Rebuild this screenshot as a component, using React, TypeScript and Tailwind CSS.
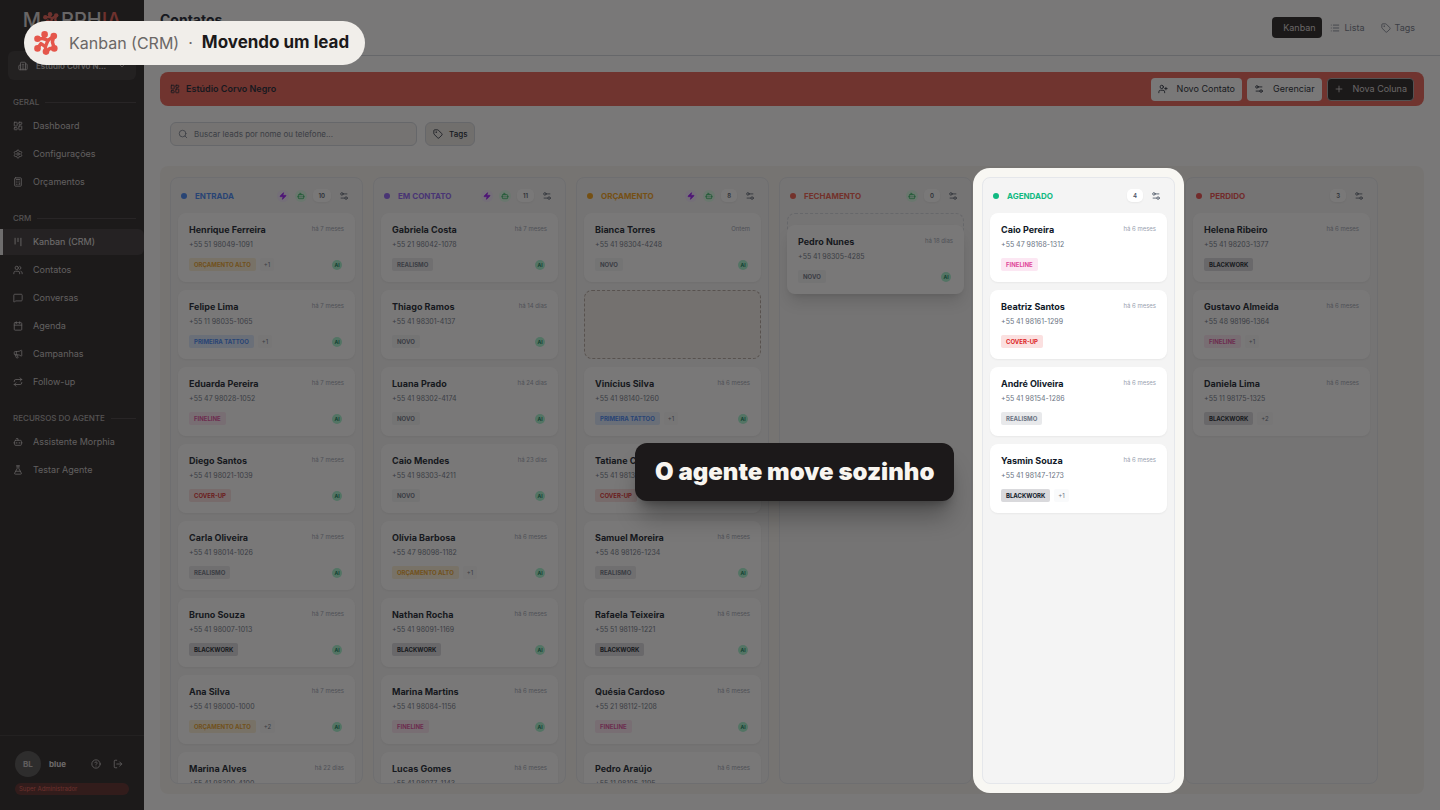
import React from 'react';
import {
  Bot,
  Building2,
  Calculator,
  Calendar,
  ChevronDown,
  CircleHelp,
  FlaskConical,
  Kanban,
  LayoutDashboard,
  List,
  LogOut,
  Megaphone,
  MessageSquare,
  Plus,
  Repeat,
  Search,
  Settings,
  Settings2,
  Tag,
  UserPlus,
  Users,
  Zap,
  type LucideIcon
} from 'lucide-react';

type TagName = 'ORÇAMENTO ALTO' | 'PRIMEIRA TATTOO' | 'FINELINE' | 'COVER-UP' | 'REALISMO' | 'BLACKWORK' | 'NOVO';

interface Lead {
  name: string;
  phone: string;
  when: string;
  tag: TagName;
  extra?: number;
  ai?: boolean;
  state?: 'origin' | 'dragging';
}

interface ColumnData {
  title: string;
  dot: string;
  text: string;
  count: number;
  zap?: boolean;
  bot?: boolean;
  active?: boolean;
  leads: Lead[];
}

const tagStyles: Record<TagName, string> = {
  'ORÇAMENTO ALTO': 'bg-[#fdf0d5] text-[#eba121]',
  'PRIMEIRA TATTOO': 'bg-[#dbe8fe] text-[#3b82f6]',
  FINELINE: 'bg-[#fce7f3] text-[#e0499a]',
  'COVER-UP': 'bg-[#fbe0e0] text-[#dc2626]',
  REALISMO: 'bg-[#e8e9eb] text-gray-500',
  BLACKWORK: 'bg-[#d9d9dc] text-gray-900',
  NOVO: 'bg-gray-100 text-gray-500'
};

const lead = (name: string, phone: string, when: string, tag: TagName, extra?: number): Lead => ({
  name,
  phone: `+55 ${phone}`,
  when,
  tag,
  extra,
  ai: true
});

const columns: ColumnData[] = [
  {
    title: 'ENTRADA',
    dot: 'bg-[#3b82f6]',
    text: 'text-[#3b82f6]',
    count: 10,
    zap: true,
    bot: true,
    leads: [
      lead('Henrique Ferreira', '51 98049-1091', 'há 7 meses', 'ORÇAMENTO ALTO', 1),
      lead('Felipe Lima', '11 98035-1065', 'há 7 meses', 'PRIMEIRA TATTOO', 1),
      lead('Eduarda Pereira', '47 98028-1052', 'há 7 meses', 'FINELINE'),
      lead('Diego Santos', '41 98021-1039', 'há 7 meses', 'COVER-UP'),
      lead('Carla Oliveira', '41 98014-1026', 'há 7 meses', 'REALISMO'),
      lead('Bruno Souza', '41 98007-1013', 'há 7 meses', 'BLACKWORK'),
      lead('Ana Silva', '41 98000-1000', 'há 7 meses', 'ORÇAMENTO ALTO', 2),
      lead('Marina Alves', '41 98300-4100', 'há 22 dias', 'NOVO')
    ]
  },
  {
    title: 'EM CONTATO',
    dot: 'bg-[#8b5cf6]',
    text: 'text-[#8b5cf6]',
    count: 11,
    zap: true,
    bot: true,
    leads: [
      lead('Gabriela Costa', '21 98042-1078', 'há 7 meses', 'REALISMO'),
      lead('Thiago Ramos', '41 98301-4137', 'há 14 dias', 'NOVO'),
      lead('Luana Prado', '41 98302-4174', 'há 24 dias', 'NOVO'),
      lead('Caio Mendes', '41 98303-4211', 'há 23 dias', 'NOVO'),
      lead('Olívia Barbosa', '47 98098-1182', 'há 6 meses', 'ORÇAMENTO ALTO', 1),
      lead('Nathan Rocha', '41 98091-1169', 'há 6 meses', 'BLACKWORK'),
      lead('Marina Martins', '41 98084-1156', 'há 6 meses', 'FINELINE'),
      lead('Lucas Gomes', '41 98077-1143', 'há 6 meses', 'NOVO')
    ]
  },
  {
    title: 'ORÇAMENTO',
    dot: 'bg-[#f59e0b]',
    text: 'text-[#f59e0b]',
    count: 8,
    zap: true,
    bot: true,
    leads: [
      lead('Bianca Torres', '41 98304-4248', 'Ontem', 'NOVO'),
      { ...lead('Pedro Nunes', '41 98305-4285', 'há 18 dias', 'NOVO'), state: 'origin' },
      lead('Vinícius Silva', '41 98140-1260', 'há 6 meses', 'PRIMEIRA TATTOO', 1),
      lead('Tatiane Castro', '41 98133-1247', 'há 6 meses', 'COVER-UP'),
      lead('Samuel Moreira', '48 98126-1234', 'há 6 meses', 'REALISMO'),
      lead('Rafaela Teixeira', '51 98119-1221', 'há 6 meses', 'BLACKWORK'),
      lead('Quésia Cardoso', '21 98112-1208', 'há 6 meses', 'FINELINE'),
      lead('Pedro Araújo', '11 98105-1195', 'há 6 meses', 'NOVO')
    ]
  },
  {
    title: 'FECHAMENTO',
    dot: 'bg-[#f05545]',
    text: 'text-[#f05545]',
    count: 0,
    bot: true,
    leads: [{ ...lead('Pedro Nunes', '41 98305-4285', 'há 18 dias', 'NOVO'), state: 'dragging' }]
  },
  {
    title: 'AGENDADO',
    dot: 'bg-[#10b981]',
    text: 'text-[#10b981]',
    count: 4,
    active: true,
    leads: [
      { ...lead('Caio Pereira', '47 98168-1312', 'há 6 meses', 'FINELINE'), ai: false },
      { ...lead('Beatriz Santos', '41 98161-1299', 'há 6 meses', 'COVER-UP'), ai: false },
      { ...lead('André Oliveira', '41 98154-1286', 'há 6 meses', 'REALISMO'), ai: false },
      { ...lead('Yasmin Souza', '41 98147-1273', 'há 6 meses', 'BLACKWORK', 1), ai: false }
    ]
  },
  {
    title: 'PERDIDO',
    dot: 'bg-[#ef4444]',
    text: 'text-[#ef4444]',
    count: 3,
    leads: [
      { ...lead('Helena Ribeiro', '41 98203-1377', 'há 6 meses', 'BLACKWORK'), ai: false },
      { ...lead('Gustavo Almeida', '48 98196-1364', 'há 6 meses', 'FINELINE', 1), ai: false },
      { ...lead('Daniela Lima', '11 98175-1325', 'há 6 meses', 'BLACKWORK', 2), ai: false }
    ]
  }
];

const menu: { title: string; items: { label: string; icon: LucideIcon; active?: boolean }[] }[] = [
  {
    title: 'GERAL',
    items: [
      { label: 'Dashboard', icon: LayoutDashboard },
      { label: 'Configurações', icon: Settings },
      { label: 'Orçamentos', icon: Calculator }
    ]
  },
  {
    title: 'CRM',
    items: [
      { label: 'Kanban (CRM)', icon: Kanban, active: true },
      { label: 'Contatos', icon: Users },
      { label: 'Conversas', icon: MessageSquare },
      { label: 'Agenda', icon: Calendar },
      { label: 'Campanhas', icon: Megaphone },
      { label: 'Follow-up', icon: Repeat }
    ]
  },
  {
    title: 'RECURSOS DO AGENTE',
    items: [
      { label: 'Assistente Morphia', icon: Bot },
      { label: 'Testar Agente', icon: FlaskConical }
    ]
  }
];

const BrandMark: React.FC<{ className?: string }> = ({ className = '' }) => (
  <svg viewBox="0 0 24 24" className={className} fill="currentColor" stroke="currentColor" aria-hidden="true">
    <g strokeWidth="3.4" fill="none" strokeLinecap="round" strokeLinejoin="round">
      <path d="M10.5 3.4 9.5 7.6 3.4 7.8" />
      <path d="M9.5 7.6 14 9.4 19.8 5" />
      <path d="M19.8 5 18.4 11 20.3 17.5" />
      <path d="M3.4 17.4 7 12.6 11.4 15.6 12 20.8" />
      <path d="M11.4 15.6 14 9.4M12 20.8 16 17.4 20.3 17.5" />
    </g>
    <g stroke="none">
      <circle cx="10.6" cy="3.4" r="3.3" />
      <circle cx="19.8" cy="5" r="3.3" />
      <circle cx="3.5" cy="7.8" r="3.3" />
      <circle cx="3.5" cy="17.4" r="3.3" />
      <circle cx="12" cy="20.6" r="3.3" />
      <circle cx="20.3" cy="17.4" r="3.3" />
    </g>
  </svg>
);

const LeadCard: React.FC<{ data: Lead; className?: string }> = ({ data, className = '' }) => (
  <article className={`h-[69px] rounded-lg bg-white px-[11px] pt-[11px] ${className}`}>
    <div className="flex items-start justify-between">
      <h3 className="text-[9px] leading-3 font-bold text-gray-900">{data.name}</h3>
      <time className="text-[6px] leading-[10px] text-gray-400">{data.when}</time>
    </div>
    <p className="mt-1 text-[7px] leading-[10px] text-gray-500">{data.phone}</p>
    <div className="mt-2 flex h-[13px] items-center">
      <span className={`rounded-[2px] px-[5px] text-[6px] leading-[13px] font-bold ${tagStyles[data.tag]}`}>
        {data.tag}
      </span>
      {data.extra && (
        <span className="ml-1 rounded-[2px] bg-gray-50 px-1 text-[6px] leading-[13px] text-gray-500">+{data.extra}</span>
      )}
      {data.ai && (
        <span className="mr-[2px] ml-auto size-[10px] rounded-full bg-emerald-200 text-center text-[5px] leading-[10px] font-bold text-emerald-700">
          AI
        </span>
      )}
    </div>
  </article>
);

const LeadSlot: React.FC<{ data: Lead }> = ({ data }) => {
  if (data.state === 'origin') {
    return <div className="h-[69px] shrink-0 rounded-lg border border-dashed border-[#b0a49c] bg-[#f2eeea]" />;
  }
  if (data.state === 'dragging') {
    return (
      <div className="relative h-[69px] rounded-lg border border-dashed border-gray-300">
        <LeadCard data={data} className="absolute -inset-x-px top-[11px] shadow-lg shadow-black/15" />
      </div>
    );
  }
  return <LeadCard data={data} className="shrink-0 shadow-xs" />;
};

// The highlighted column dims everything around it with its own spread shadow
const Column: React.FC<{ column: ColumnData }> = ({ column }) => (
  <section
    className={`flex w-[193px] shrink-0 flex-col overflow-hidden rounded-lg border border-gray-200 bg-[#f4f4f4] px-[7px] ${
      column.active ? 'relative z-10 shadow-[0_0_0_9px_#f8f7f3,0_0_0_2400px_rgba(28,26,26,0.59)]' : ''
    }`}
  >
    <header className="flex h-[35px] shrink-0 items-center pr-[6px] pl-[3px]">
      <span className={`size-[6px] rounded-full ${column.dot}`} />
      <h2 className={`ml-2 text-[8px] leading-3 font-bold ${column.text}`}>{column.title}</h2>
      <div className="ml-auto flex items-center gap-[6px]">
        {column.zap && (
          <span className="flex size-3 items-center justify-center rounded-full bg-purple-100 text-purple-600">
            <Zap className="size-2" fill="currentColor" />
          </span>
        )}
        {column.bot && (
          <span className="flex size-3 items-center justify-center rounded-full bg-green-100 text-green-600">
            <Bot className="size-2" />
          </span>
        )}
        <span className="rounded-[5px] bg-white px-[6px] text-[6px] leading-[13px] font-semibold text-gray-600 shadow-xs">
          {column.count}
        </span>
        <button type="button" aria-label={`Configurar ${column.title}`} className="ml-[2px] text-gray-600">
          <Settings2 className="size-[10px]" />
        </button>
      </div>
    </header>
    <div className="flex min-h-0 flex-1 flex-col gap-2">
      {column.leads.map(item => (
        <LeadSlot key={item.name} data={item} />
      ))}
    </div>
  </section>
);

const Sidebar: React.FC = () => (
  <aside className="flex w-36 shrink-0 flex-col bg-[#1e1b1c] text-[#c4c1c1]">
    <div className="flex h-[51px] shrink-0 items-start justify-center pt-2 text-[20px] leading-6 font-medium text-[#d6d3d3]">
      M
      <BrandMark className="mx-[2px] mt-1 size-4 text-[#e5564b]" />
      RPH<span className="text-[#e5564b]">IA</span>
    </div>
    <button
      type="button"
      className="mx-2 flex h-[29px] shrink-0 items-center rounded-md bg-[#2f2c2d] px-[10px] text-[8px] font-semibold"
    >
      <Building2 className="size-[10px]" />
      <span className="ml-2">Estúdio Corvo N...</span>
      <ChevronDown className="ml-auto size-2" />
    </button>
    <nav className="mt-4 flex flex-1 flex-col gap-[17px]">
      {menu.map(group => (
        <div key={group.title}>
          <h2 className="mr-2 ml-[13px] flex items-center gap-[6px] text-[8px] leading-3 font-medium text-[#a5a2a2]">
            {group.title}
            <span className="h-px flex-1 bg-[#3a3738]" />
          </h2>
          <ul className="mt-[5px] flex flex-col gap-[2px]">
            {group.items.map(({ label, icon: Icon, active }) => (
              <li key={label}>
                <a
                  href="#"
                  className={`flex h-[26px] items-center gap-[10px] text-[9px] ${
                    active ? 'rounded-r-md border-l-[3px] border-[#e5e5e5] bg-[#333031] pl-[10px] text-[#e8e5e5]' : 'pl-[13px]'
                  }`}
                >
                  <Icon className="size-[10px]" />
                  {label}
                </a>
              </li>
            ))}
          </ul>
        </div>
      ))}
    </nav>
    <footer className="h-[75px] shrink-0 border-t border-[#2f2c2d] px-[15px] pt-[15px]">
      <div className="flex items-center">
        <span className="size-[26px] rounded-full bg-[#4a4a4a] text-center text-[8px] leading-[26px] font-bold">BL</span>
        <span className="ml-2 text-[8px] font-bold text-[#e0dddd]">blue</span>
        <button type="button" aria-label="Ajuda" className="ml-auto">
          <CircleHelp className="size-[10px]" />
        </button>
        <button type="button" aria-label="Sair" className="mr-[6px] ml-3">
          <LogOut className="size-[10px]" />
        </button>
      </div>
      <p className="mt-[6px] h-3 rounded-full bg-[#54211f] px-1 text-[6px] leading-3 text-[#dc5248]">Super Administrador</p>
    </footer>
  </aside>
);

export default function App() {
  return (
    <div className="relative flex h-screen min-h-[600px] overflow-hidden bg-white font-['Inter',sans-serif]">
      <Sidebar />
      <main className="flex min-w-0 flex-1 flex-col">
        <div className="flex h-14 shrink-0 items-center justify-between border-b border-gray-300 px-4">
          <h1 className="-mt-4 text-[14px] leading-5 font-bold text-gray-900">Contatos</h1>
          <div className="flex items-center text-[9px] text-gray-500">
            <button type="button" className="h-[21px] w-[50px] rounded bg-[#1c191a] pl-1 text-[#d6d3d3]">
              Kanban
            </button>
            <button type="button" className="ml-2 flex items-center gap-1">
              <List className="size-[10px]" />
              Lista
            </button>
            <button type="button" className="mr-[9px] ml-4 flex items-center gap-1">
              <Tag className="size-[10px]" />
              Tags
            </button>
          </div>
        </div>

        <div className="flex min-h-0 flex-1 flex-col p-4">
          <div className="flex h-[34px] shrink-0 items-center rounded-lg bg-[#ea5b4f] px-[10px] text-[9px] text-gray-900">
            <LayoutDashboard className="size-[10px]" />
            <span className="ml-[6px] font-semibold">Estúdio Corvo Negro</span>
            <div className="ml-auto flex gap-[5px]">
              <button type="button" className="flex h-[23px] items-center gap-[9px] rounded bg-white px-[7px]">
                <UserPlus className="size-[10px]" />
                Novo Contato
              </button>
              <button type="button" className="flex h-[23px] items-center gap-[9px] rounded bg-white px-[7px]">
                <Settings2 className="size-[10px]" />
                Gerenciar
              </button>
              <button
                type="button"
                className="flex h-[23px] items-center gap-[9px] rounded border border-[#a5a2a2] bg-[#1c191a] px-[6px] text-[#d6d3d3]"
              >
                <Plus className="size-[10px]" />
                Nova Coluna
              </button>
            </div>
          </div>

          <div className="mt-4 flex shrink-0 gap-2 px-[10px]">
            <label className="flex h-6 w-[247px] items-center gap-[6px] rounded-md border border-gray-300 bg-[#f5f3f0] px-[7px] text-gray-500">
              <Search className="size-[10px]" />
              <input
                type="search"
                aria-label="Buscar leads"
                placeholder="Buscar leads por nome ou telefone..."
                className="min-w-0 flex-1 bg-transparent text-[8px] outline-none placeholder:text-gray-500"
              />
            </label>
            <button
              type="button"
              className="flex h-6 items-center gap-[6px] rounded-md border border-gray-300 bg-[#ebe8e4] px-[7px] text-[8px] font-medium text-gray-900"
            >
              <Tag className="size-[10px]" />
              Tags
            </button>
          </div>

          <div className="mt-5 flex min-h-0 flex-1 gap-[10px] rounded-lg bg-[#f8f5f1] px-[10px] pt-[11px] pb-[10px]">
            {columns.map(column => (
              <Column key={column.title} column={column} />
            ))}
          </div>
        </div>
      </main>

      <div className="absolute top-[21px] left-6 z-20 flex h-11 items-center rounded-full bg-[#f1eeea] pr-4 pl-[10px] text-[16px] text-[#6b6766]">
        <BrandMark className="size-6 text-[#e5564b]" />
        <span className="ml-[11px]">Kanban (CRM)</span>
        <span className="mx-[9px]">·</span>
        <strong className="text-[17px] font-bold text-[#1c191a]">Movendo um lead</strong>
      </div>

      <p className="absolute top-[443px] left-[635px] z-20 rounded-xl bg-[#1c191a] px-5 py-[13px] text-[24px] leading-8 font-black text-[#f8f5f0] shadow-xl shadow-black/30">
        O agente move sozinho
      </p>
    </div>
  );
}
